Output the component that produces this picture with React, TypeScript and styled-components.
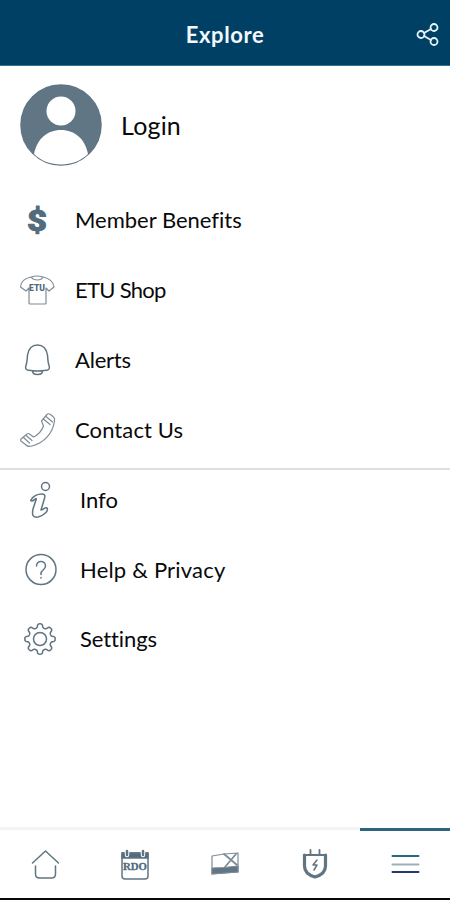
import React from "react";
import styled, { createGlobalStyle } from "styled-components";

const Global = createGlobalStyle`
  *{box-sizing:border-box}
  body{margin:0;background:#fff}
`;
const Screen = styled.div`
  width:450px;height:900px;display:flex;flex-direction:column;background:#fff;
  font-family:Lato,"Open Sans",sans-serif;color:#090909;overflow:hidden;
`;
const Header = styled.header`
  height:66px;flex:none;background:#004064;border-bottom:1px solid #3b7190;color:#f3f8fc;
  display:grid;grid-template-columns:50px 1fr 50px;align-items:center;padding-top:5px;
`;
const Title = styled.h1`
  margin:0;grid-column:2;text-align:center;font-size:22px;line-height:32px;font-weight:700;letter-spacing:.6px;
`;
const Share = styled.div`display:flex;padding-left:16px;`;
const Profile = styled.div`height:118px;display:flex;align-items:center;padding-left:20px;gap:19px;flex:none;`;
const Main = styled.nav`flex:none;height:286px;padding-top:1px;border-bottom:2px solid #dddfe1;`;
const More = styled.nav`flex:none;margin-top:-4px;`;
const Row = styled.div<{ $indent?: boolean }>`
  height:${p => p.$indent ? 69.5 : 70}px;display:flex;align-items:center;
  padding-left:${p => p.$indent ? 20 : 17}px;gap:${p => p.$indent ? 20 : 18}px;
`;
const Label = styled.span<{ $size?: number; $spacing?: number }>`
  font-size:${p => p.$size ?? 22}px;line-height:32px;letter-spacing:${p => p.$spacing ?? 0}px;
  font-variant-ligatures:none;white-space:nowrap;padding-bottom:1px;
`;
const Glyph = styled.svg`
  display:block;flex:none;fill:none;stroke:#607481;stroke-width:1.5;
  stroke-linecap:round;stroke-linejoin:round;overflow:visible;
`;
const FineGlyph = styled(Glyph)`stroke:#7d8c96;stroke-width:1.2;`;
const ShareGlyph = styled(Glyph)`stroke:#e6f4fc;stroke-width:1.8;`;
const Tabs = styled.footer`
  height:73px;margin-top:auto;display:grid;grid-template-columns:repeat(5,1fr);border-bottom:2px solid #080808;flex:none;
`;
const Tab = styled.div<{ $active?: boolean }>`
  display:flex;align-items:center;justify-content:center;
  margin-top:${p => p.$active ? 1 : 0}px;
  border-top:3px solid ${p => p.$active ? "#2d657f" : "#f4f4f4"};
  padding-bottom:${p => p.$active ? 2 : 1}px;
`;

const gearPath = Array.from({ length: 144 }, (_, i) => {
  const a = (i / 144) * Math.PI * 2;
  const r = 13.3 + 1.9 * Math.tanh(2.2 * Math.cos(8 * a));
  return `${i ? "L" : "M"}${(20 + r * Math.sin(a)).toFixed(2)} ${(19 - r * Math.cos(a)).toFixed(2)}`;
}).join("") + "Z";

const Dollar = () => <Glyph width="40" height="40"><text x="10" y="30.5" fontFamily="Roboto" fontWeight="900" fontSize="29" fill="#526b7d" stroke="#526b7d" strokeWidth=".9" textLength="20" lengthAdjust="spacingAndGlyphs">$</text></Glyph>;
const Shirt = () => <FineGlyph width="40" height="40"><path d="M14 7C9 8 4 10 3.500 17l5.500 4 3-3v15q0 1 1 1h15q1 0 1-1V18l3 3 5-4C36 10 31 8 26 7c-2 4-9 4-12 0ZM14 7q6-2 12 0"/><text x="12" y="20.500" fontFamily="Roboto" fontWeight="900" fontSize="9" fill="#526b7d" stroke="none" textLength="16" lengthAdjust="spacingAndGlyphs">ETU</text></FineGlyph>;
const Bell = () => <Glyph width="40" height="40"><path d="M20.500 5c-6 0-9 4-10 10-.4 5-.4 8-1.700 11-.8 3 .7 4 2.700 4.200q9 1.500 18 0c2-.2 3.500-1.200 2.700-4.200-1.300-3-1.300-6-1.700-11-1-6-4-10-10-10ZM15.500 31q0 3.500 5 3.500t5-3.500"/></Glyph>;
const Phone = () => <FineGlyph width="40" height="40"><path d="M24.500 11 30 4.500q1.500-1.500 3.500 0l3 2.500q1.500 1 1 4C36 23 27 33 15 36q-4 1-6-1l-5-4q-1-1 0-2l6-5q1.500-1 2.500 0l4 3c5-2 8-6 10-11ZM26.500 9l6.500 5.500M29 6.500l6.500 5.500M6.500 27.500l6 5.500M9 25.500l6 5"/></FineGlyph>;
const Info = () => <Glyph width="40" height="40"><circle cx="25.500" cy="5.500" r="4"/><path d="M11 19c2-4 7-6 11-6 4 0 3 3 2 6l-3 10c2 0 4-3 6-2 2 3-4 8-9 9-6 1-6-3-5-8l3-9c1-4-2 1-4 1Q10 20 11 19Z"/></Glyph>;
const Help = () => <Glyph width="40" height="40"><circle cx="21" cy="19.500" r="15"/><path d="M16.500 16c0-6 9-6 9 0 0 4-4.500 4-4.500 7.500v1M21 27.500v.5"/></Glyph>;
const Gear = () => <Glyph width="40" height="40"><path d={gearPath}/><circle cx="20" cy="19" r="6.500"/></Glyph>;

export default function App() {
  return <><Global/><Screen>
    <Header><Title>Explore</Title><Share><ShareGlyph width="24" height="24"><circle cx="5" cy="11.500" r="3.500"/><circle cx="18" cy="4.500" r="3.500"/><circle cx="18" cy="18.500" r="3.500"/><path d="m8 10 7-4M8 13l7 4"/></ShareGlyph></Share></Header>
    <Profile><Glyph width="82" height="82" viewBox="0 0 82 82"><circle cx="41" cy="41" r="40" fill="#607685"/><circle cx="41" cy="27" r="14.500" fill="white" stroke="none"/><path d="M14 70c3-15 13-24 27-24s24 9 27 24c-14 14-40 14-54 0Z" fill="white" stroke="none"/></Glyph><Label $size={25} $spacing={0.2}>Login</Label></Profile>
    <Main><Row><Dollar/><Label>Member Benefits</Label></Row><Row><Shirt/><Label $spacing={-0.7}>ETU Shop</Label></Row><Row><Bell/><Label $spacing={-0.2}>Alerts</Label></Row><Row><Phone/><Label $spacing={0.1}>Contact Us</Label></Row></Main>
    <More><Row $indent><Info/><Label>Info</Label></Row><Row $indent><Help/><Label $spacing={0.2}>Help &amp; Privacy</Label></Row><Row $indent><Gear/><Label $spacing={-0.1}>Settings</Label></Row></More>
    <Tabs>
      <Tab><Glyph width="30" height="34"><path d="m2.500 16 13-12 13 12M5.500 19v8q0 4 4 4h12q4 0 4-4v-8"/></Glyph></Tab>
      <Tab><Glyph width="30" height="34"><path d="M2 6h26v23q0 3-3 3H5q-3 0-3-3Z"/><path d="M2 6h26v5H2Z" fill="#526b7d"/><path d="M7 4v4M23 4v4" stroke="#fff" strokeWidth="4.500"/><path d="M7 4v4M23 4v4" strokeWidth="2.500"/><text x="3" y="22.500" fontFamily="Liberation Serif" fontWeight="700" fontSize="11" fill="#526b7d" stroke="#526b7d" strokeWidth=".3" textLength="24" lengthAdjust="spacingAndGlyphs">RDO</text></Glyph></Tab>
      <Tab><FineGlyph width="30" height="34"><path d="m2 9 12-2 14-1v19L2 27Z"/><path d="m2 21 12-.5L28 19v6L2 27Z" fill="#607685"/><path d="m14 7 13 11M26 7 15 20" strokeWidth="1.800"/></FineGlyph></Tab>
      <Tab><Glyph width="30" height="34"><path d="M4.500 8v11q0 8 10.500 11 10.500-3 10.500-11V8" strokeWidth="3.200"/><path d="M4 8h22M10.500 3v5M19.500 3v5" strokeWidth="1.800"/><path d="m17 13-4 5h4l-3 5"/></Glyph></Tab>
      <Tab $active><Glyph width="30" height="34"><path d="M2.500 9h26" stroke="#276a7e" strokeWidth="2"/><path d="M2.500 17.500h26" stroke="#9cafbb" strokeWidth="2"/><path d="M2.500 25h26" stroke="#233875" strokeWidth="2"/></Glyph></Tab>
    </Tabs>
  </Screen></>;
}
